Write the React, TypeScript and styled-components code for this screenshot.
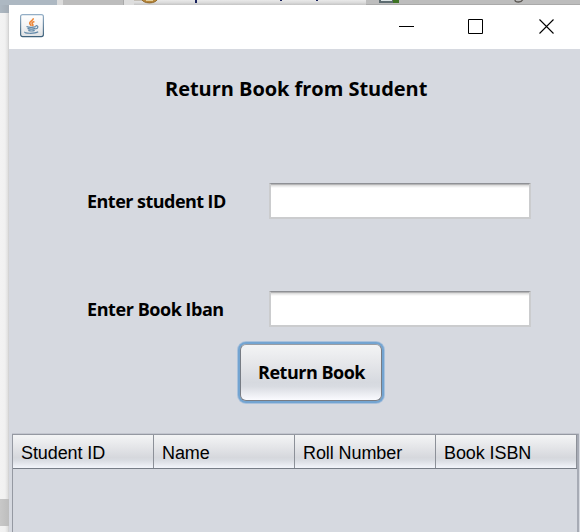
import React from 'react';
import styled, { createGlobalStyle } from 'styled-components';

const Global = createGlobalStyle`
  * { box-sizing: border-box; }
  html, body { margin: 0; padding: 0; overflow: hidden; }
  button, input { font: inherit; margin: 0; }
`;

const Desktop = styled.div`
  width: 580px;
  height: 532px;
  overflow: hidden;
  display: grid;
  grid-template: 5px 527px / 9px 571px;
  background: #f1f1f1;
`;

const TopStrip = styled.div`
  grid-column: 1 / 3;
  display: flex;
  background: #c1c1c1;
`;

const Strip = styled.div<{ $w: number; $bg: string }>`
  width: ${(p) => p.$w}px;
  height: 5px;
  background: ${(p) => p.$bg};
`;

const LeftStrip = styled.div`
  display: flex;
  flex-direction: column;
  background: linear-gradient(90deg, #f3f3f3 0, #f1f1f1 5px, #dedede 8px, #c9c9c9 9px);
`;

const LeftHeader = styled.div`
  height: 8px;
  background: linear-gradient(90deg, #adb8c2, #a3acb5);
`;

const LeftThumb = styled.div`
  height: 27px;
  margin-top: 486px;
  background: linear-gradient(90deg, #c8c8c8, #bdbdbd);
`;

const Window = styled.main`
  display: flex;
  flex-direction: column;
  background: #d6d9e0;
  color: #000;
`;

const TitleBar = styled.header`
  height: 44px;
  flex: none;
  display: flex;
  align-items: flex-start;
  justify-content: space-between;
  padding: 9px 25px 0 11px;
  background: #fff;
`;

const AppIcon = styled.svg`
  display: block;
  width: 24px;
  height: 24px;
`;

const WindowControls = styled.div`
  display: flex;
  gap: 54px;
  padding-top: 5px;
`;

const ControlIcon = styled.svg<{ $gap?: number }>`
  display: block;
  width: 16px;
  height: 16px;
  margin-left: ${(p) => p.$gap ?? 0}px;
`;

const Heading = styled.h1`
  margin: 26px 0 0 156px;
  height: 28px;
  font: 700 20px/28px 'Open Sans', sans-serif;
  letter-spacing: -0.04px;
  white-space: nowrap;
`;

const Form = styled.form`
  display: flex;
  flex-direction: column;
`;

const FieldRow = styled.label<{ $top: number }>`
  display: grid;
  grid-template-columns: 182px 262px;
  align-items: center;
  height: 36px;
  margin: ${(p) => p.$top}px 0 0 78px;
  font: 700 18px/26px 'Open Sans', sans-serif;
`;

const FieldLabel = styled.span<{ $spacing: number }>`
  letter-spacing: ${(p) => p.$spacing}px;
  white-space: nowrap;
`;

/* A capital I without serifs */
const PlainCap = styled.span`
  font-family: Roboto, sans-serif;
  line-height: 1;
  letter-spacing: 0;
`;

const Field = styled.input`
  width: 262px;
  height: 36px;
  padding: 4px 8px;
  outline: none;
  border: solid;
  border-width: 1px 2px 2px;
  border-color: #8e9095 #cbccce #cbccce;
  border-radius: 0;
  background: linear-gradient(#b5b5b6 0 1px, #dedede 1px 2px, #ededed 2px 3px, #f9f9f9 3px 4px, #fff 4px);
`;

const ReturnButton = styled.button`
  width: 142px;
  height: 57px;
  margin: 17px 0 0 231px;
  padding: 0 0 0 1px;
  border: 1px solid #777c84;
  border-top-color: #999da4;
  border-radius: 6px;
  background: linear-gradient(#f3f4f5 0%, #e7e8eb 30%, #d6d9df 68%, #d9dce2 76%, #fafbff 100%);
  box-shadow: 0 0 0 2px #73a4d1, 0 0 0 3px #a9c1dc;
  font: 700 18px/26px 'Open Sans', sans-serif;
  letter-spacing: -0.5px;
  color: #000;

  span { display: block; margin-top: -2px; }
`;

const TablePane = styled.section`
  width: 567px;
  height: 110px;
  margin: 33px 0 0 3px;
  border: solid #9599a2;
  border-width: 1px 2px 0 1px;
  border-right-color: #a7abb5;
  box-shadow: 0 -1px 0 #c3c6cf;
`;

const HeaderRow = styled.div`
  display: grid;
  grid-template-columns: repeat(4, 141px);
  height: 34px;
  border-bottom: 1px solid #777d87;
  background: linear-gradient(#f4f5f6 0%, #e5e6e9 35%, #d6d8dd 68%, #d9dce2 77%, #f3f5fb 100%);
`;

const HeaderCell = styled.div`
  height: 33px;
  padding: 1px 0 0 8px;
  border-right: 1px solid #8c9098;
  font: 18px/35px 'Liberation Sans', Arial, sans-serif;
  letter-spacing: -0.09px;
  white-space: nowrap;
`;

const columns = ['Student ID', 'Name', 'Roll Number', 'Book ISBN'];

const topStrips: [number, string][] = [
  [57, '#adb8c2'], [6, '#dcdcdc'], [60, '#bdbdbd'], [1, '#a9a9a9'], [10, '#dedede'],
];

function JavaIcon() {
  return (
    <AppIcon viewBox="0 0 24 24" fill="none">
      <defs>
        <linearGradient id="frame" x2="0" y2="1">
          <stop stopColor="#93aec6" /><stop offset="1" stopColor="#3f627c" />
        </linearGradient>
        <linearGradient id="face" x2="0" y2="1">
          <stop stopColor="#fff" /><stop offset=".5" stopColor="#f4f4f5" /><stop offset="1" stopColor="#dfe1e3" />
        </linearGradient>
      </defs>
      <rect x=".6" y=".6" width="22.8" height="22" rx="2" fill="url(#face)" stroke="url(#frame)" strokeWidth="1.2" />
      <path d="M13.2 4.2c.5 2.2-4 3-3.5 5.2.2 1 1.2 1.3 1.6 2.4M14.4 7.4c-2.6.9-2.9 1.8-1.8 2.8.6.6.2 1.4-.3 1.8" stroke="#ec8435" strokeWidth="1.6" />
      <path d="M6.5 12.5c2 .8 7 .8 9.6 0M7.5 14.4c2 .9 5.6.9 7.9 0M8.3 16.4c1.8.7 4.5.7 6.4 0M15.6 11.8c3.2-.7 3 2.6-.2 3.2M5 17.9c-2 1.6 9.7 2.1 13.2-.1" stroke="#5e86a7" strokeWidth="1.2" />
    </AppIcon>
  );
}

function BackgroundTabs() {
  return (
    <TopStrip>
      {topStrips.map(([w, bg], i) => <Strip key={i} $w={w} $bg={bg} />)}
      <svg width="446" height="5" viewBox="134 0 446 5">
        <defs>
          <linearGradient id="tab" x2="0" y2="1">
            <stop stopColor="#e9e9e9" /><stop offset=".5" stopColor="#dcdcdc" /><stop offset="1" stopColor="#c4c4c4" />
          </linearGradient>
        </defs>
        <path d="M134 0h232v5H134z" fill="url(#tab)" />
        <path d="M366 0h214v5H366z" fill="#bdbdbd" />
        <path d="M366 4h214v1H366z" fill="#aaa" />
        <path d="M134 0h8v1h-8z" fill="#c4bfb7" />
        <ellipse cx="149.5" cy="-1.5" rx="8" ry="4.4" fill="#b8873a" stroke="#8e6526" />
        <path d="M146 0h7v1h-7z" fill="#e3cf9e" />
        <path d="M195 0h2v3h-2zM280 0h2v1h-2zM316 0h2v1h-2z" fill="#17205c" />
        <path d="M379 0h15v3h-15z" fill="#5d6b70" />
        <path d="M381 0h11v1h-11z" fill="#dce4e5" />
        <path d="M393 0h6v3h-6z" fill="#3e7424" />
        <path d="M515 0q0 2 3.5 2T523-1" fill="none" stroke="#5b5753" strokeWidth="1.3" />
      </svg>
    </TopStrip>
  );
}

export default function App() {
  return (
    <>
      <Global />
      <Desktop>
        <BackgroundTabs />
        <LeftStrip>
          <LeftHeader />
          <LeftThumb />
        </LeftStrip>
        <Window>
          <TitleBar>
            <JavaIcon />
            <WindowControls>
              <ControlIcon viewBox="0 0 16 16" $gap={1}><path d="M0 7.5h15" stroke="#000" /></ControlIcon>
              <ControlIcon viewBox="0 0 16 16" $gap={-1}><path d="M.5.5h14v14H.5z" fill="none" stroke="#000" /></ControlIcon>
              <ControlIcon viewBox="0 0 16 16" $gap={1}><path d="M.5.5l14 14m0-14l-14 14" stroke="#000" strokeWidth="1.1" /></ControlIcon>
            </WindowControls>
          </TitleBar>
          <Heading>Return Book from Student</Heading>
          <Form onSubmit={(e) => e.preventDefault()}>
            <FieldRow $top={80}>
              <FieldLabel $spacing={-0.53}>Enter student <PlainCap>I</PlainCap>D</FieldLabel>
              <Field />
            </FieldRow>
            <FieldRow $top={72}>
              <FieldLabel $spacing={-0.43}>Enter Book <PlainCap>I</PlainCap>ban</FieldLabel>
              <Field />
            </FieldRow>
            <ReturnButton><span>Return Book</span></ReturnButton>
          </Form>
          <TablePane>
            <HeaderRow>
              {columns.map((name) => <HeaderCell key={name}>{name}</HeaderCell>)}
            </HeaderRow>
          </TablePane>
        </Window>
      </Desktop>
    </>
  );
}
